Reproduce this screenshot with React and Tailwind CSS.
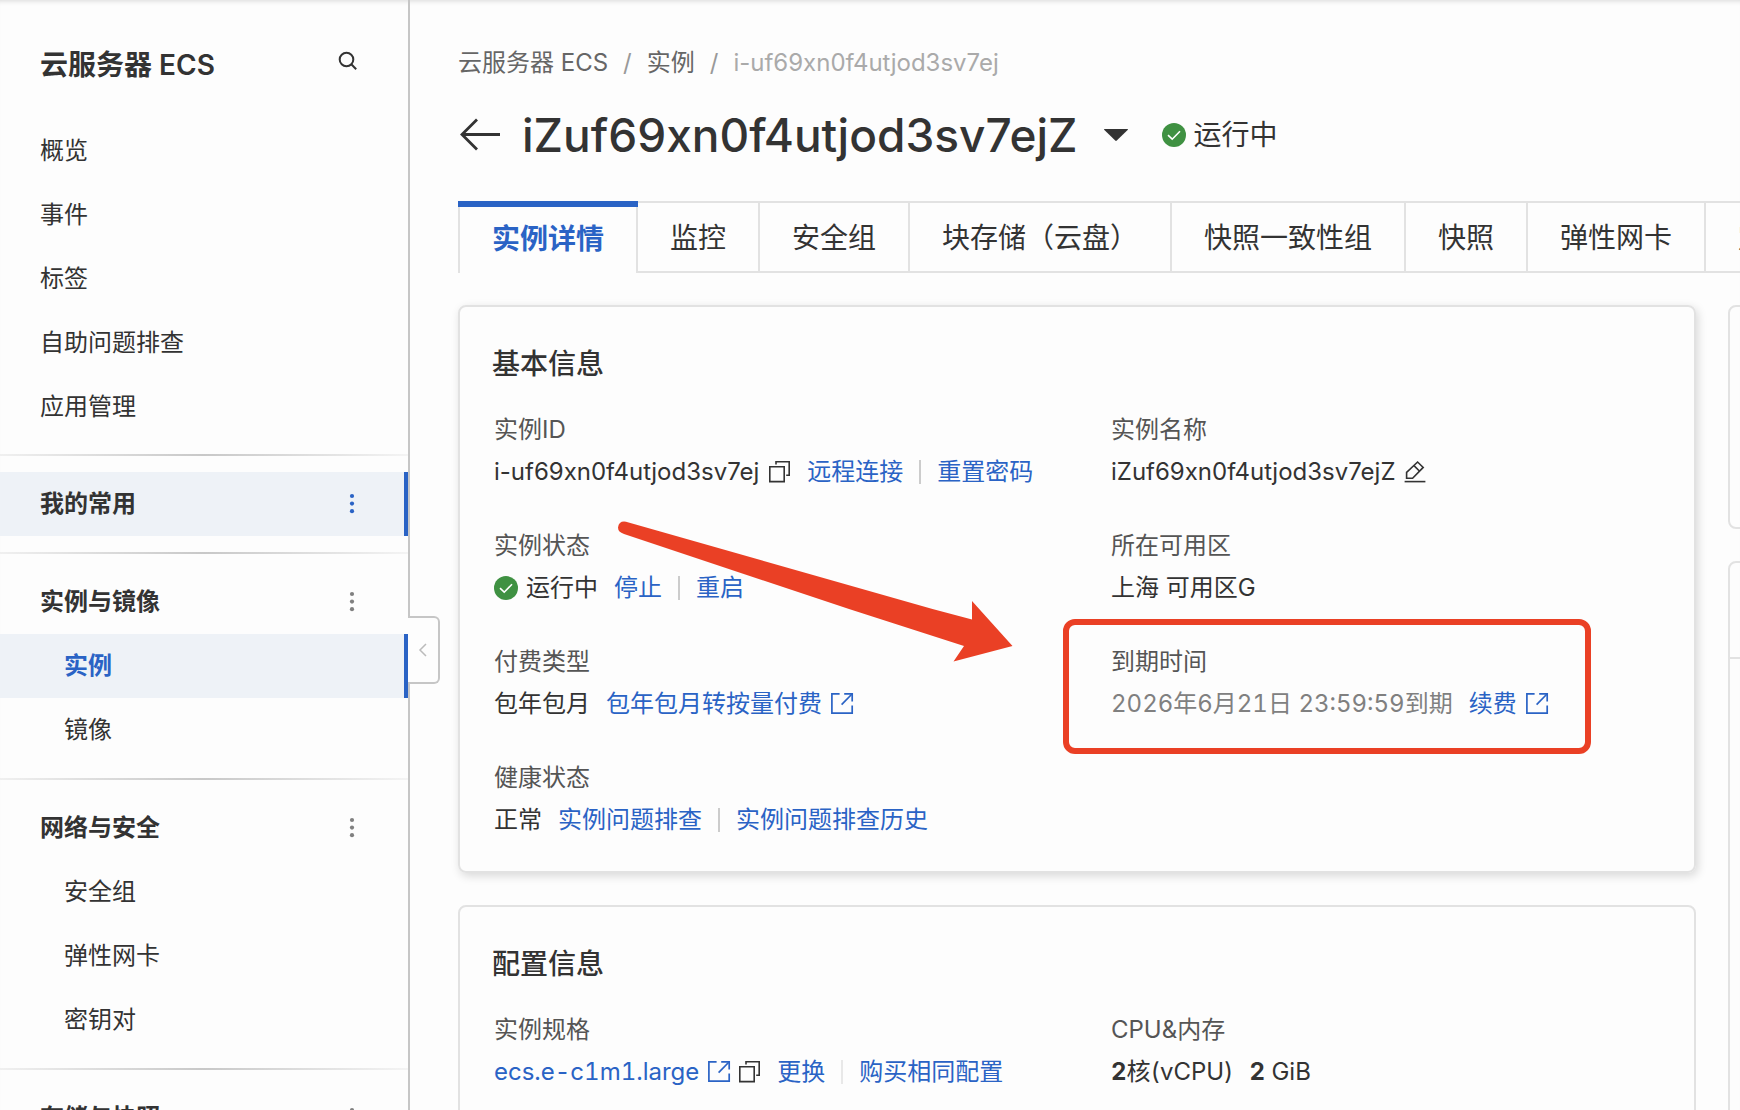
import { useState } from 'react';
import React from 'react'

const topLinks = ['概览', '事件', '标签', '自助问题排查', '应用管理'];

const groups = [
  { title: '我的常用', highlighted: true, items: [] },
  { title: '实例与镜像', items: ['实例', '镜像'] },
  { title: '网络与安全', items: ['安全组', '弹性网卡', '密钥对'] },
  { title: '存储与快照', items: [] },
];

const tabs = ['实例详情', '监控', '安全组', '块存储（云盘）', '快照一致性组', '快照', '弹性网卡', '定时与自动化任务'];

const instanceId = 'i-uf69xn0f4utjod3sv7ej';
const instanceName = 'iZuf69xn0f4utjod3sv7ejZ';

function SearchIcon() {
  return (
    <svg width="20" height="20" viewBox="0 0 20 20" fill="none" stroke="#333" strokeWidth="2">
      <circle cx="8.5" cy="8.5" r="6.8" />
      <path d="M13.3 13.3L18.2 18.2" />
    </svg>
  );
}

function DotsIcon() {
  return (
    <svg width="24" height="24" viewBox="0 0 24 24" fill="currentColor">
      <circle cx="12" cy="4" r="2.1" />
      <circle cx="12" cy="11.6" r="2.1" />
      <circle cx="12" cy="19.2" r="2.1" />
    </svg>
  );
}

function CheckIcon() {
  return (
    <svg width="24" height="24" viewBox="0 0 24 24" fill="none" className="shrink-0">
      <circle cx="12" cy="12" r="12" fill="#3f9142" />
      <path d="M6 12.2L10.2 16.2L18 8.2" stroke="#fff" strokeWidth="1.6" />
    </svg>
  );
}

function CopyIcon() {
  return (
    <svg width="24" height="24" viewBox="0 0 24 24" fill="none" stroke="#333" strokeWidth="1.6">
      <path d="M2.8 6.8H17.2V21.6H2.8Z" />
      <path d="M9 4.6V1.8H22.2V15.2H19.2" />
    </svg>
  );
}

function ExternalIcon() {
  return (
    <svg width="24" height="24" viewBox="0 0 24 24" fill="none" stroke="currentColor" strokeWidth="1.7" className="shrink-0">
      <path d="M9.6 1.8H1.9V21.2H22.2V13.6" />
      <path d="M14.2 1.8H22.2V9.4" />
      <path d="M22 2L11.6 12.6" />
    </svg>
  );
}

function EditIcon() {
  return (
    <svg width="24" height="24" viewBox="0 0 24 24" fill="none" stroke="#333" strokeWidth="1.6">
      <path d="M1.6 21.6H22.4" />
      <path d="M3.6 18.200V12.400L14.600 2L20.200 7.400L9.600 18.200Z" />
      <path d="M11 5.600L16.600 11.200" />
    </svg>
  );
}

function Link({ children, external }) {
  return (
    <a href="#" className="flex items-center gap-2 text-[#2a63c5]">
      {children}
      {external && <ExternalIcon />}
    </a>
  );
}

function Separator({ light }) {
  return <span className={light ? 'h-6 w-0.5 shrink-0 bg-[#e8e8e8]' : 'h-6 w-0.5 shrink-0 bg-[#cccccc]'}></span>;
}

function Field({ label, children }) {
  return (
    <div className="relative pl-[34px] leading-[42px] whitespace-nowrap">
      <dt className="text-[#555]">{label}</dt>
      <dd className="flex items-center gap-4">{children}</dd>
    </div>
  );
}

function Divider() {
  return <div className="my-4 h-0.5 bg-linear-to-r from-[#f0f0f0] via-[#c8c8c8] to-[#f4f4f4]"></div>;
}

function Sidebar() {
  const [current, setCurrent] = useState('实例');

  return (
    <aside className="relative w-[410px] shrink-0 border-r-2 border-[#c6c6c6]">
      <div className="h-full overflow-hidden">
        <div className="flex items-center justify-between pt-[45px] pr-[50px] pb-[33px] pl-10">
          <h2 className="text-[28px] leading-10 font-semibold">云服务器 ECS</h2>
          <button aria-label="搜索" className="pb-2"><SearchIcon /></button>
        </div>

        <nav>
          {topLinks.map((t) => (
            <a key={t} href="#" className="block h-16 pl-10 leading-[66px]">{t}</a>
          ))}

          {groups.map((g) => (
            <div key={g.title}>
              <Divider />
              <div
                className={
                  g.highlighted
                    ? 'flex h-16 items-center justify-between border-r-4 border-[#2a63c5] bg-[#eef2f7] pr-10 pl-10'
                    : 'flex h-16 items-center justify-between pr-11 pl-10'
                }
              >
                <span className="font-semibold">{g.title}</span>
                <button
                  aria-label={g.title + '更多'}
                  className={g.highlighted ? 'text-[#2a63c5]' : 'text-[#808080]'}
                >
                  <DotsIcon />
                </button>
              </div>
              {g.items.map((item) => (
                <a
                  key={item}
                  href="#"
                  onClick={() => setCurrent(item)}
                  className={
                    item === current
                      ? 'block h-16 border-r-4 border-[#2a63c5] bg-[#eef2f7] pl-16 leading-[64px] font-semibold text-[#2a63c5]'
                      : 'block h-16 pl-16 leading-[64px]'
                  }
                >
                  {item}
                </a>
              ))}
            </div>
          ))}
        </nav>
      </div>

      {/* collapse handle, sits over the sidebar border */}
      <button
        aria-label="收起"
        className="absolute top-[616px] left-full flex h-[68px] w-8 items-center justify-center rounded-r-md border-2 border-l-0 border-[#c6c6c6] bg-[#fdfdfd]"
      >
        <svg width="12" height="14" viewBox="0 0 12 14" fill="none" stroke="#bbb" strokeWidth="1.5">
          <path d="M9 1L3 7L9 13" />
        </svg>
      </button>
    </aside>
  );
}

function Header() {
  return (
    <header>
      <nav className="flex gap-[15px] pt-[45px] leading-9 text-[#666]">
        <a href="#">云服务器 ECS</a>
        <span className="text-[#999]">/</span>
        <a href="#">实例</a>
        <span className="text-[#999]">/</span>
        <span className="text-[#aaa]">{instanceId}</span>
      </nav>

      <div className="mt-6 flex h-[60px] items-center">
        <button aria-label="返回">
          <svg width="44" height="36" viewBox="0 0 44 36" fill="none" stroke="#333" strokeWidth="2.8">
            <path d="M4 17.5H42" />
            <path d="M19 2.5L4 17.5L19 32.5" />
          </svg>
        </button>
        <h1 className="ml-5 text-[46px] leading-[60px] font-medium">{instanceName}</h1>
        <button aria-label="切换实例" className="ml-[26px]">
          <svg width="24" height="14" viewBox="0 0 24 14" fill="#333">
            <path d="M0.8 1H23.2Q24.6 1 23.6 2L12.8 12.6Q12 13.3 11.2 12.6L0.4 2Q-0.6 1 0.8 1Z" />
          </svg>
        </button>
        <span className="ml-[34px] flex items-center gap-2 text-[28px]">
          <CheckIcon />
          运行中
        </span>
      </div>
    </header>
  );
}

function Tabs() {
  const [active, setActive] = useState('实例详情');

  return (
    <div role="tablist" className="mt-9 flex overflow-hidden text-[28px] whitespace-nowrap">
      {tabs.map((t) => (
        <button
          key={t}
          role="tab"
          aria-selected={t === active}
          onClick={() => setActive(t)}
          className={
            t === active
              ? 'flex h-[72px] shrink-0 flex-col font-semibold text-[#2a63c5]'
              : 'h-[72px] shrink-0 border-y-2 border-r-2 border-[#e2e2e2] px-8 pt-0.5'
          }
        >
          {t === active ? (
            <>
              <span className="h-1.5 w-full bg-[#2a63c5]"></span>
              <span className="flex flex-1 items-center border-x-2 border-[#e2e2e2] px-8 pb-0.5">{t}</span>
            </>
          ) : t}
        </button>
      ))}
    </div>
  );
}

function BasicInfo() {
  return (
    <section className="rounded-lg border-2 border-[#e2e2e2] pt-9 pb-[30px] shadow-[2px_3px_10px_rgba(0,0,0,0.15)]">
      <h3 className="pl-8 text-[28px] leading-[42px] font-medium">基本信息</h3>
      <dl className="mt-6 grid grid-cols-2 gap-y-8">
        <Field label="实例ID">
          <span className="flex items-center gap-2">
            {instanceId}
            <button aria-label="复制"><CopyIcon /></button>
          </span>
          <Link>远程连接</Link>
          <Separator />
          <Link>重置密码</Link>
        </Field>
        <Field label="实例名称">
          <span className="flex items-center gap-2">
            {instanceName}
            <button aria-label="编辑"><EditIcon /></button>
          </span>
        </Field>

        <Field label="实例状态">
          <span className="flex items-center gap-2"><CheckIcon />运行中</span>
          <Link>停止</Link>
          <Separator />
          <Link>重启</Link>
          {/* red arrow pointing at the expiry date */}
          <svg
            width="400" height="150" viewBox="0 0 400 150" fill="#ea4025"
            className="pointer-events-none absolute -top-1.5 left-[155px]"
          >
            <path d="M11 2.7L317.500 90L357 100.500L357 82L397.500 127L338.500 142.500L349 127L234 90L9 15Q3 13 3 8.500Q4 1.500 11 2.700Z" />
          </svg>
        </Field>
        <Field label="所在可用区">上海 可用区G</Field>

        <Field label="付费类型">
          <span>包年包月</span>
          <Link external>包年包月转按量付费</Link>
        </Field>
        <Field label="到期时间">
          <span className="text-[#808080] tabular-nums">2026年6月21日 23:59:59到期</span>
          <Link external>续费</Link>
          <div className="pointer-events-none absolute -top-[22px] -left-[14px] h-[135px] w-[528px] rounded-xl border-6 border-[#ea4025]"></div>
        </Field>

        <Field label="健康状态">
          <span>正常</span>
          <Link>实例问题排查</Link>
          <Separator />
          <Link>实例问题排查历史</Link>
        </Field>
      </dl>
    </section>
  );
}

function ConfigInfo() {
  return (
    <section className="rounded-lg border-2 border-[#e2e2e2] pt-9 pb-[30px]">
      <h3 className="pl-8 text-[28px] leading-[42px] font-medium">配置信息</h3>
      <dl className="mt-6 grid grid-cols-2 gap-y-8 tabular-nums">
        <Field label="实例规格">
          <span className="flex items-center gap-1.5">
            <Link external>ecs.e-c1m1.large</Link>
            <button aria-label="复制"><CopyIcon /></button>
          </span>
          <Link>更换</Link>
          <Separator light />
          <Link>购买相同配置</Link>
        </Field>
        <Field label="CPU&内存">
          <span><b>2</b>核(vCPU)</span>
          <span><b>2</b> GiB</span>
        </Field>
      </dl>
    </section>
  );
}

function App() {
  return (
    <div className="flex h-screen overflow-hidden bg-[#fdfdfd] font-['Inter','Noto_Sans_CJK_SC',sans-serif] text-[24px] text-[#333] shadow-[inset_0_5px_5px_-4px_rgba(0,0,0,0.15)]">
      <Sidebar />

      <main className="min-w-0 flex-1 overflow-hidden pl-12">
        <Header />
        <Tabs />

        <div className="mt-8 flex gap-8">
          <div className="flex w-[calc(100%-44px)] shrink-0 flex-col gap-8">
            <BasicInfo />
            <ConfigInfo />
          </div>

          {/* right column scrolls off the edge of the window */}
          <div className="flex w-96 shrink-0 flex-col gap-8">
            <div className="h-56 rounded-lg border-2 border-[#e2e2e2]"></div>
            <div className="flex-1 rounded-lg border-2 border-[#e2e2e2]">
              <div className="h-24 border-b-2 border-[#e2e2e2]"></div>
            </div>
          </div>
        </div>
      </main>
    </div>
  );
}

export default App;
